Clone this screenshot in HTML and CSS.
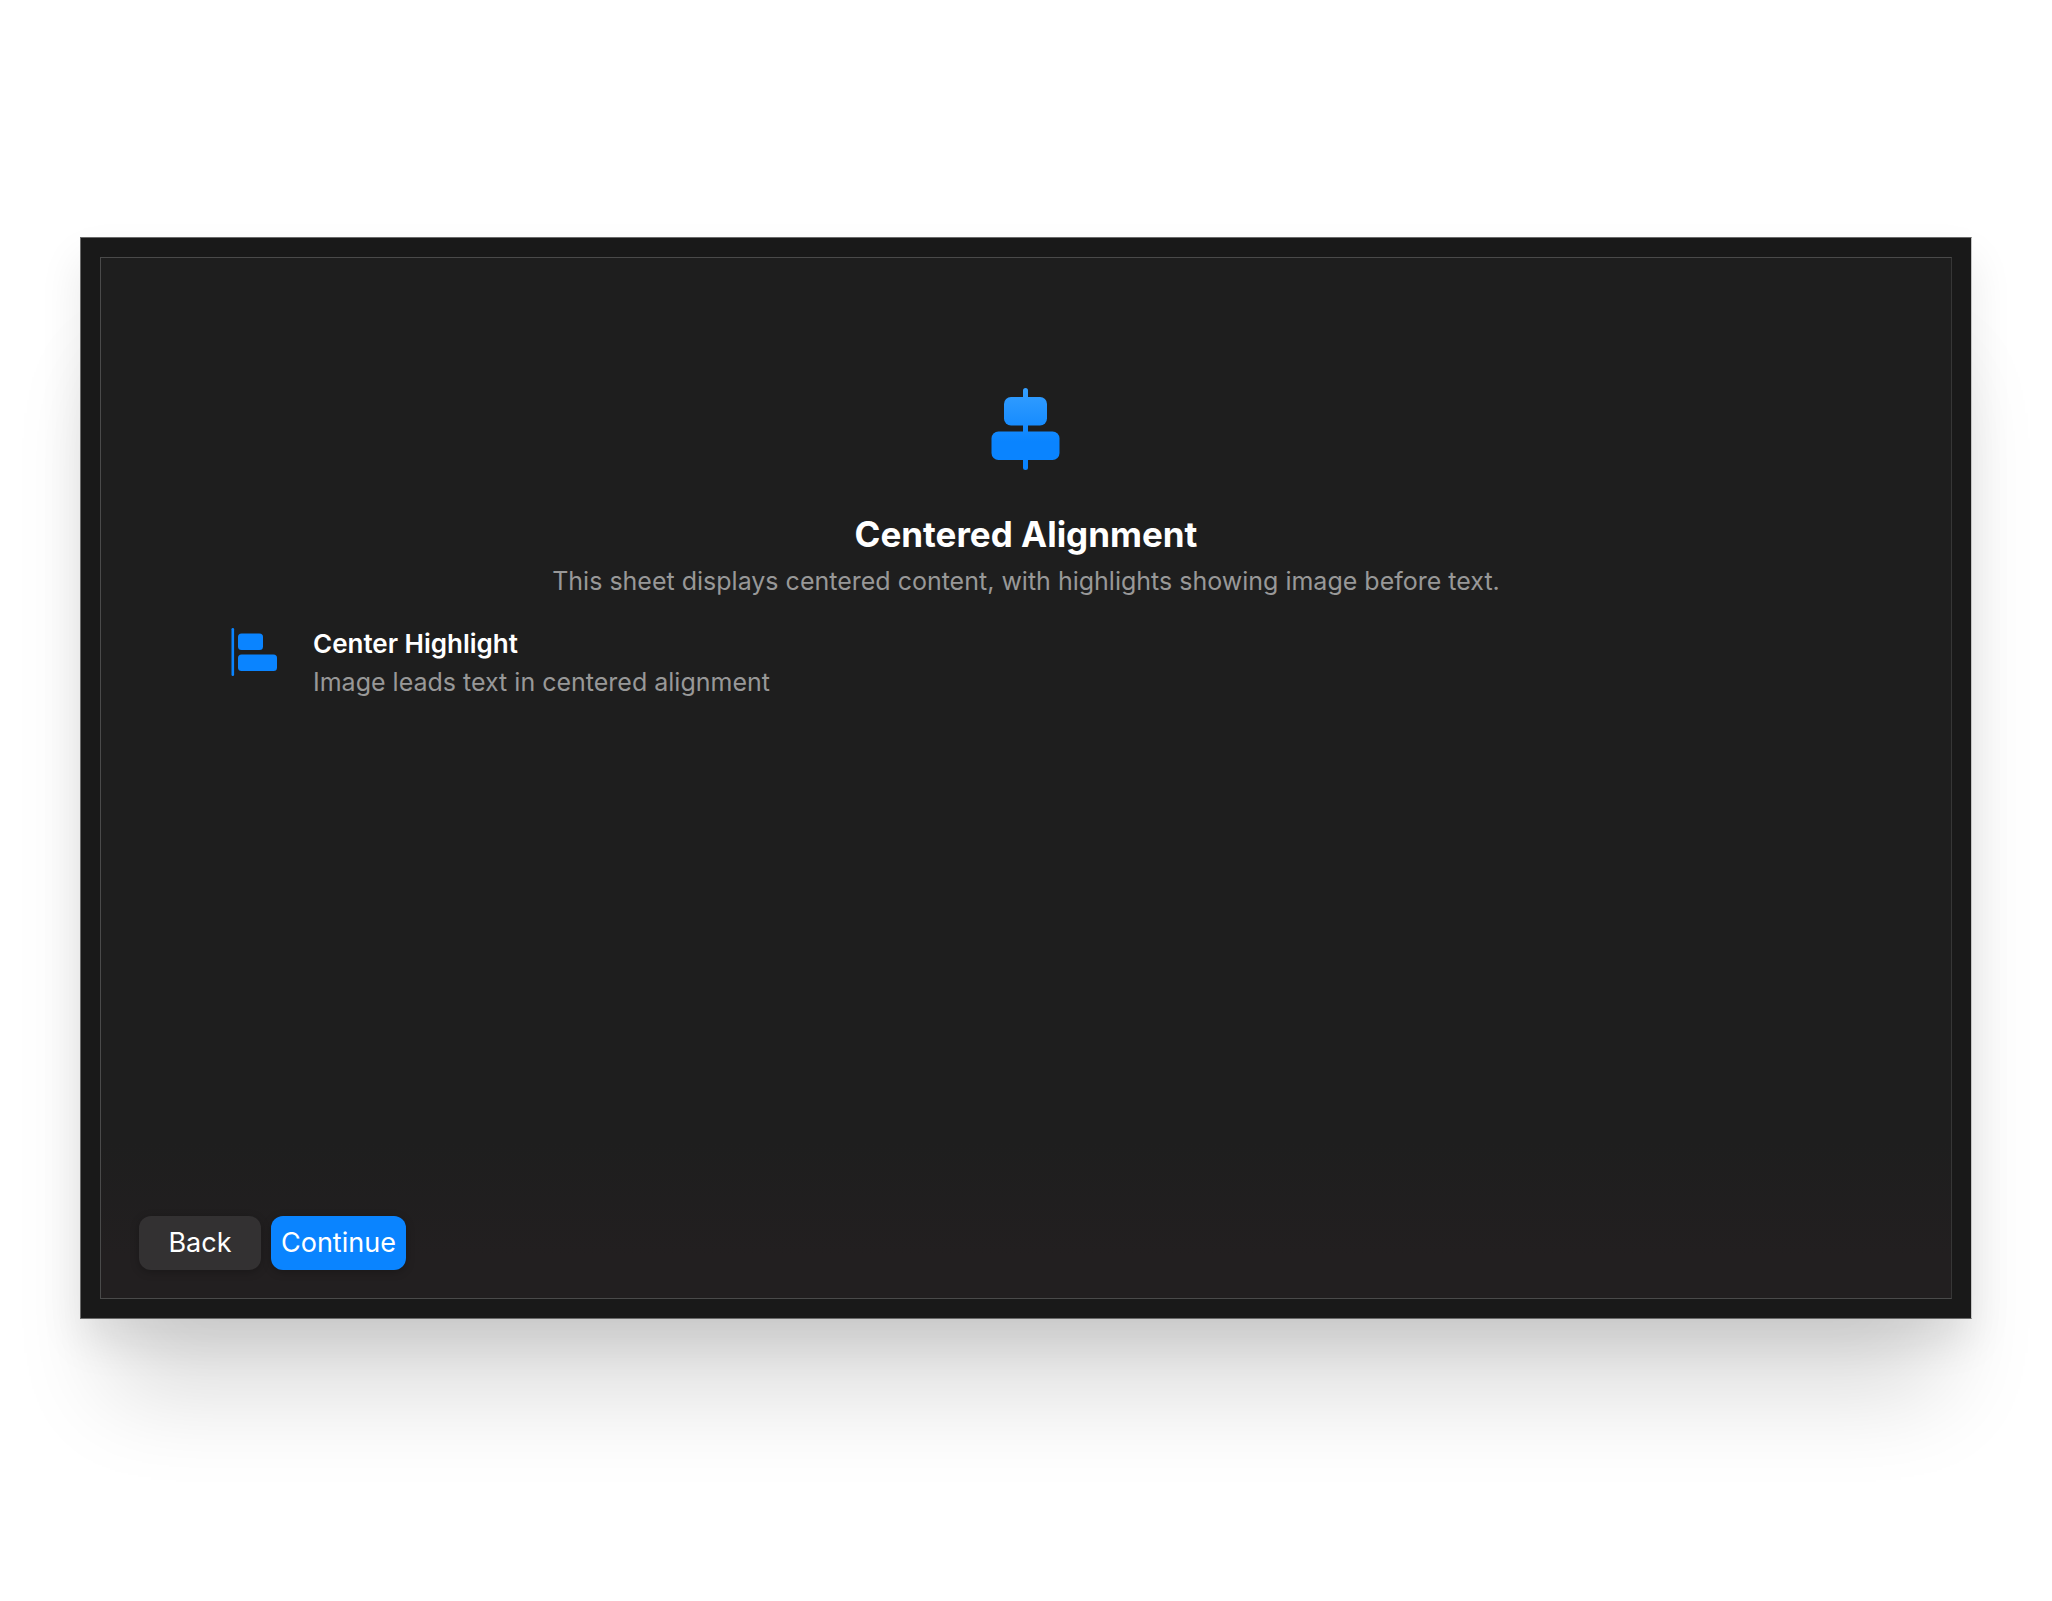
FILE: index.html
```html
<!DOCTYPE html>
<html lang="en">
<head>
<meta charset="utf-8">
<title>Centered Alignment</title>
<link rel="stylesheet" href="styles.css">
</head>
<body>
<main class="window">
  <section class="sheet">
    <header class="intro">
      <svg class="hero-icon" viewBox="0 0 70 82" aria-hidden="true">
        <defs>
          <linearGradient id="hero-fill" gradientUnits="userSpaceOnUse" x1="0" y1="0" x2="0" y2="82">
            <stop offset="0" stop-color="#359fff"/>
            <stop offset="0.65" stop-color="#0a84ff"/>
          </linearGradient>
        </defs>
        <g fill="url(#hero-fill)">
          <rect x="32" y="0" width="5" height="82" rx="2.5"/>
          <rect x="13" y="9" width="43" height="28.5" rx="7"/>
          <rect x="0.5" y="43.5" width="68" height="28.5" rx="7"/>
        </g>
      </svg>
      <h1 class="title">Centered Alignment</h1>
      <p class="subtitle">This sheet displays centered content, with highlights showing image before text.</p>
    </header>
    <ul class="highlights">
      <li class="highlight">
        <svg class="highlight-icon" viewBox="0 0 48 48" aria-hidden="true">
          <g fill="#0a84ff">
            <rect x="0.5" y="0" width="2.6" height="48" rx="1.2"/>
            <rect x="7" y="5.5" width="25" height="16.5" rx="3.5"/>
            <rect x="7" y="26.5" width="39" height="16.5" rx="3.5"/>
          </g>
        </svg>
        <div>
          <h2 class="highlight-title">Center Highlight</h2>
          <p class="highlight-text">Image leads text in centered alignment</p>
        </div>
      </li>
    </ul>
    <footer class="actions">
      <button class="button" type="button">Back</button>
      <button class="button button-primary" type="button">Continue</button>
    </footer>
  </section>
</main>
</body>
</html>
```
FILE: styles.css
```css
* {
  box-sizing: border-box;
}

body {
  display: flex;
  min-height: 100vh;
  margin: 0;
  padding: 237px 80px 282px;
  background: #fff;
  color: #fff;
  font-family: Inter, "Liberation Sans", sans-serif;
  font-size: 25px;
  line-height: 38px;
}

h1,
h2,
p,
ul {
  margin: 0;
  padding: 0;
}

.window {
  display: flex;
  flex: 1;
  padding: 19px;
  border: 1px solid #6a6a6a;
  border-right-color: #c4c4c4;
  background: #191919;
  box-shadow: 0 105px 90px -30px rgba(0, 0, 0, 0.14), 0 22px 40px rgba(0, 0, 0, 0.09);
}

.sheet {
  display: flex;
  flex: 1;
  flex-direction: column;
  padding: 130px 38px 28px;
  border: 1px solid #4a4a4a;
  border-right-color: #363636;
  background: linear-gradient(#1e1e1e 85%, #221f20 96%);
}

.intro {
  display: flex;
  flex-direction: column;
  align-items: center;
  text-align: center;
}

.hero-icon {
  width: 70px;
  height: 82px;
  margin-bottom: 42px;
}

.title {
  margin-bottom: 6px;
  font-size: 35px;
  font-weight: 700;
  line-height: 44px;
}

.subtitle,
.highlight-text {
  color: #989898;
}

.highlights {
  flex: 1;
  padding: 25px 92px;
  list-style: none;
}

.highlight {
  display: flex;
  gap: 34px;
}

.highlight-icon {
  flex: none;
  width: 48px;
  height: 48px;
  margin-top: 3px;
}

.highlight-title {
  font-size: 26px;
  font-weight: 600;
}

.actions {
  display: flex;
  gap: 10px;
}

.button {
  min-width: 122px;
  padding: 8px 10px;
  border: 0;
  border-radius: 12px;
  background: #333132;
  box-shadow: 0 2px 8px rgba(0, 0, 0, 0.25);
  color: #fff;
  font: inherit;
  font-size: 27px;
}

.button-primary {
  background: #0a84ff;
}
```
